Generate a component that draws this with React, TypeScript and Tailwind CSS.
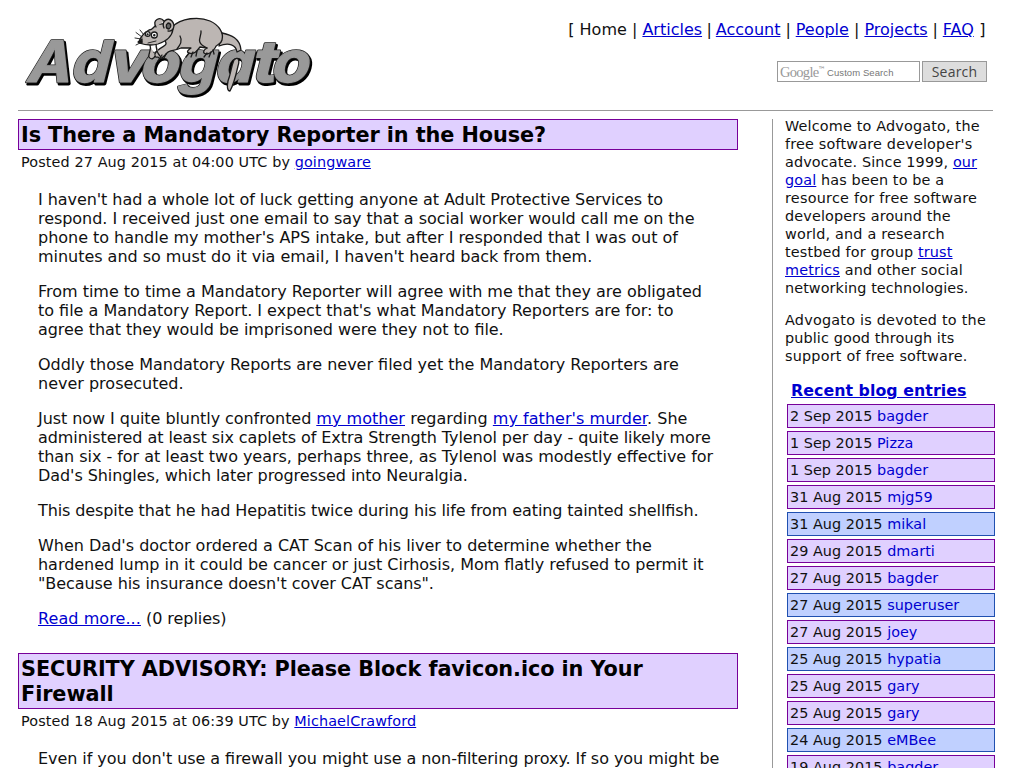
import type { ReactNode } from 'react';

const entries: [string, string, 'p' | 'b'][] = [
  ['2 Sep 2015', 'bagder', 'p'],
  ['1 Sep 2015', 'Pizza', 'p'],
  ['1 Sep 2015', 'bagder', 'p'],
  ['31 Aug 2015', 'mjg59', 'p'],
  ['31 Aug 2015', 'mikal', 'b'],
  ['29 Aug 2015', 'dmarti', 'p'],
  ['27 Aug 2015', 'bagder', 'p'],
  ['27 Aug 2015', 'superuser', 'b'],
  ['27 Aug 2015', 'joey', 'p'],
  ['25 Aug 2015', 'hypatia', 'b'],
  ['25 Aug 2015', 'gary', 'p'],
  ['25 Aug 2015', 'gary', 'p'],
  ['24 Aug 2015', 'eMBee', 'b'],
  ['19 Aug 2015', 'bagder', 'p'],
];

const letters: [string, number, number][] = [
  ['A', 25, 44],
  ['d', 69, 38],
  ['v', 107, 37],
  ['o', 138, 39],
  ['g', 176, 38],
  ['a', 213, 38],
  ['t', 250, 24],
  ['o', 269, 38],
];

function A({ children }: { children: ReactNode }) {
  return (
    <a href="#" className="text-[#0000d0] underline">
      {children}
    </a>
  );
}

function Word({ dx, dy, className }: { dx: number; dy: number; className: string }) {
  return (
    <g className={className} strokeLinejoin="round">
      {letters.map(([c, x, w], i) => (
        <text
          key={i}
          transform={`translate(${x + dx} ${82 + dy}) skewX(-14)`}
          textLength={w}
          lengthAdjust="spacingAndGlyphs"
          className="font-['Inter',sans-serif] text-[57px] font-bold [font-feature-settings:'cv11']"
        >
          {c}
        </text>
      ))}
    </g>
  );
}

function Logo() {
  return (
    <svg width="360" height="110" viewBox="0 0 360 110" role="img" aria-label="Advogato" className="block">
      <Word dx={1.5} dy={1.5} className="fill-black stroke-black stroke-[3px]" />
      <Word dx={0} dy={0} className="fill-[#222] stroke-[#222] stroke-[2.6px]" />
      <Word dx={0} dy={0} className="fill-[#999] stroke-[#999] stroke-[1.2px]" />
      <g stroke="#1a1a1a" strokeWidth="1.3" strokeLinejoin="round" strokeLinecap="round" fill="#bcb6b3">
        <path d="M222 33C231 35 240 38 241 50L237 52C236 45 229 42 219 46Z" />
        <path d="M234 60C238 56 240 60 238 66C236 75 234 84 230 91C227 91 227 86 228 81C231 73 231 67 234 60Z" />
        <path d="M172 27C181 18 199 16 210 21C219 25 224 33 222 40C221 45 216 44 215 48C213 51 211 53 207 54C202 54 203 50 207 48L200 47C197 51 194 55 189 53C186 52 188 50 191 48L181 48C175 51 169 50 167 53C164 57 160 60 158 57C155 58 153 55 157 51C162 46 167 46 166 43C163 37 166 31 172 27Z" />
        <path d="M150 45C152 50 148 53 149 57C151 60 154 59 155 56M156 43C156 49 157 53 160 56M162 55L158 61M166 54L164 58" />
        <path d="M155 26C161 22 170 24 173 29C172 38 164 42 158 44C151 46 145 45 139 43C139 38 145 32 149 30C152 30 153 28 155 26Z" />
        <path d="M156 27C152 20 160 16 164 21M164 28C161 21 168 17 172 21C176 26 173 32 168 31" />
        <path d="M168 23C171 23 172 27 169 29C166 29 165 25 168 23Z" fill="#666" />
        <path d="M201 31C202 37 194 42 207 48M180 36C183 41 180 45 177 49" fill="none" />
        <path d="M189 53L186 57M193 52L191 57M197 51L196 56M207 53L204 57M211 52L209 57M213 50L214 54" fill="none" />
        <circle cx="154.3" cy="35" r="3" fill="#fff" />
        <circle cx="147.7" cy="34" r="2.4" fill="#fff" />
        <path d="M138 42L142 39L142 43Z" fill="#111" />
        <path d="M142 37L136 32.5M141 39L135 38M142 42L136 45M144 35L140 30M148 43L156 41" fill="none" strokeWidth="0.9" />
        <circle cx="154.3" cy="35.3" r="0.6" fill="#111" />
        <circle cx="147.6" cy="34.3" r="0.5" fill="#111" />
      </g>
    </svg>
  );
}

function Title({ children }: { children: ReactNode }) {
  return (
    <h2 className="border border-[#770099] bg-[#e0d0ff] px-[2px] pt-[3px] pb-px text-[20.8px] leading-[25px] font-bold tracking-[-0.08px] text-black">
      {children}
    </h2>
  );
}

function Line({ className, children }: { className: string; children: ReactNode }) {
  return <span className={`block ${className}`}>{children}</span>;
}

export default function App() {
  return (
    <div className="h-[768px] w-[1024px] overflow-hidden bg-white font-['DejaVu_Sans',sans-serif] text-[16px] leading-[19px] text-[#111]">
      <header className="flex h-[110px] justify-between pr-[37px]">
        <Logo />
        <div className="flex flex-col items-end pt-[20px]">
          <nav className="pr-px whitespace-pre">
            [ Home | <A>Articles</A>
            <span className="tracking-[-0.6px]"> | </span>
            <A>Account</A>
            <span className="tracking-[-0.1px]"> | </span>
            <A>People</A> | <A>Projects</A>
            <span className="tracking-[-0.1px]"> | </span>
            <A>FAQ</A>
            <span className="tracking-[0.45px]">{' ]'}</span>
          </nav>
          <form className="mt-[22px] flex gap-[2px]">
            <div className="flex h-[21px] w-[143px] items-center border border-[#999] pl-[2px] whitespace-nowrap text-[#888]">
              <span className="w-[38px] font-['Liberation_Serif',serif] text-[14.5px] leading-[14px] tracking-[-0.7px] text-[#999]">
                Google
              </span>
              <span className="mb-[4px] w-[7px] text-[7.5px] leading-[6px]">™</span>
              <span className="mt-px ml-[2px] font-['Liberation_Sans',sans-serif] text-[9.5px] tracking-[0.08px] text-[#777]">
                Custom Search
              </span>
            </div>
            <button
              type="button"
              className="h-[21px] w-[65px] border border-[#999] bg-[#ddd] font-['Open_Sans',sans-serif] text-[14px] leading-[19px] tracking-[0.2px] text-[#444]"
            >
              Search
            </button>
          </form>
        </div>
      </header>
      <div className="ml-[18px] h-px w-[975px] bg-[#999]" />
      <div className="flex pt-[8px] pl-[18px]">
        <main className="w-[720px] shrink-0 [font-feature-settings:'liga']">
          <article>
            <Title>Is There a Mandatory Reporter in the House?</Title>
            <div className="pt-[3px] pl-[3px] text-[14.4px] leading-[18px] tracking-[0.11px]">
              Posted 27 Aug 2015 at 04:00 UTC by <A>goingware</A>
            </div>
            <div className="flex flex-col gap-4 pt-[19px] pl-5 whitespace-nowrap">
              <p>
                <Line className="tracking-[-0.06px]">
                  I haven't had a whole lot of luck getting anyone at Adult Protective Services to
                </Line>
                <Line className="tracking-[-0.048px]">
                  respond. I received just one email to say that a social worker would call me on the
                </Line>
                <Line className="tracking-[-0.025px]">
                  phone to handle my mother's APS intake, but after I responded that I was out of
                </Line>
                <Line className="tracking-[-0.03px]">
                  minutes and so must do it via email, I haven't heard back from them.
                </Line>
              </p>
              <p>
                <Line className="tracking-[-0.015px]">
                  From time to time a Mandatory Reporter will agree with me that they are obligated
                </Line>
                <Line className="tracking-[-0.01px]">
                  to file a Mandatory Report. I expect that's what Mandatory Reporters are for: to
                </Line>
                <Line className="tracking-[-0.05px]">agree that they would be imprisoned were they not to file.</Line>
              </p>
              <p>
                <Line className="tracking-[-0.015px]">
                  Oddly those Mandatory Reports are never filed yet the Mandatory Reporters are
                </Line>
                <Line className="tracking-[0px]">never prosecuted.</Line>
              </p>
              <p>
                <Line className="tracking-[0.04px]">
                  <span className="tracking-[-0.06px]">Just now I quite bluntly confronted </span>
                  <A>my mother</A> regarding <A>my father's murder</A>. She
                </Line>
                <Line className="tracking-[-0.07px]">
                  administered at least six caplets of Extra Strength Tylenol per day - quite likely more
                </Line>
                <Line className="tracking-[-0.035px]">
                  than six - for at least two years, perhaps three, as Tylenol was modestly effective for
                </Line>
                <Line className="tracking-[-0.075px]">Dad's Shingles, which later progressed into Neuralgia.</Line>
              </p>
              <p className="tracking-[-0.1px]">
                This despite that he had Hepatitis twice during his life from eating tainted shellfish.
              </p>
              <p>
                <Line className="tracking-[0px]">
                  When Dad's doctor ordered a CAT Scan of his liver to determine whether the
                </Line>
                <Line className="tracking-[-0.03px]">
                  hardened lump in it could be cancer or just Cirhosis, Mom flatly refused to permit it
                </Line>
                <Line className="tracking-[-0.06px]">"Because his insurance doesn't cover CAT scans".</Line>
              </p>
              <p>
                <span className="tracking-[0.08px]">
                  <A>Read more...</A>
                </span>{' '}
                <span className="tracking-[-0.06px]">(0 replies)</span>
              </p>
            </div>
          </article>
          <article className="mt-[25px]">
            <Title>
              SECURITY ADVISORY: Please Block favicon.ico in Your
              <br />
              Firewall
            </Title>
            <div className="pt-[3px] pl-[3px] text-[14.4px] leading-[18px] tracking-[0.1px]">
              Posted 18 Aug 2015 at 06:39 UTC by <A>MichaelCrawford</A>
            </div>
            <p className="pt-[19px] pl-5 tracking-[-0.055px] whitespace-nowrap">
              Even if you don't use a firewall you might use a non-filtering proxy. If so you might be
            </p>
          </article>
        </main>
        <aside className="ml-[34px] h-[680px] w-[223px] shrink-0 border-l border-[#999] text-[14.4px] leading-[18px]">
          <div className="-mt-[2px] flex flex-col gap-[14px] pl-[12px] whitespace-nowrap">
            <p>
              <Line className="tracking-[0.17px]">Welcome to Advogato, the</Line>
              <Line className="tracking-[0.18px]">free software developer's</Line>
              <Line className="tracking-[0.13px]">
                advocate. Since 1999, <A>our</A>
              </Line>
              <Line className="tracking-[0.14px]">
                <A>goal</A> has been to be a
              </Line>
              <Line className="tracking-[0.24px]">resource for free software</Line>
              <Line className="tracking-[0.14px]">developers around the</Line>
              <Line className="tracking-[0.18px]">world, and a research</Line>
              <Line className="tracking-[0.16px]">
                testbed for group <A>trust</A>
              </Line>
              <Line className="tracking-[0.16px]">
                <A>metrics</A> and other social
              </Line>
              <Line className="tracking-[0.08px]">networking technologies.</Line>
            </p>
            <p>
              <Line className="tracking-[0.22px]">Advogato is devoted to the</Line>
              <Line className="tracking-[0.12px]">public good through its</Line>
              <Line className="tracking-[0.2px]">support of free software.</Line>
            </p>
          </div>
          <h3 className="mt-[17px] pl-[18px] text-[15.8px] leading-[18px] font-bold tracking-[0.05px]">
            <A>Recent blog entries</A>
          </h3>
          <ul className="mt-[4px] ml-[14px] flex flex-col gap-[3px]">
            {entries.map(([date, who, kind], i) => (
              <li
                key={i}
                className={
                  kind === 'p'
                    ? 'h-[24px] border border-[#770099] bg-[#e0d0ff] p-[2px] tracking-[0.03px]'
                    : 'h-[24px] border border-[#2050b0] bg-[#c0d0ff] p-[2px] tracking-[0.03px]'
                }
              >
                {date}{' '}
                <a href="#" className="text-[#0000d0]">
                  {who}
                </a>
              </li>
            ))}
          </ul>
        </aside>
      </div>
    </div>
  );
}
